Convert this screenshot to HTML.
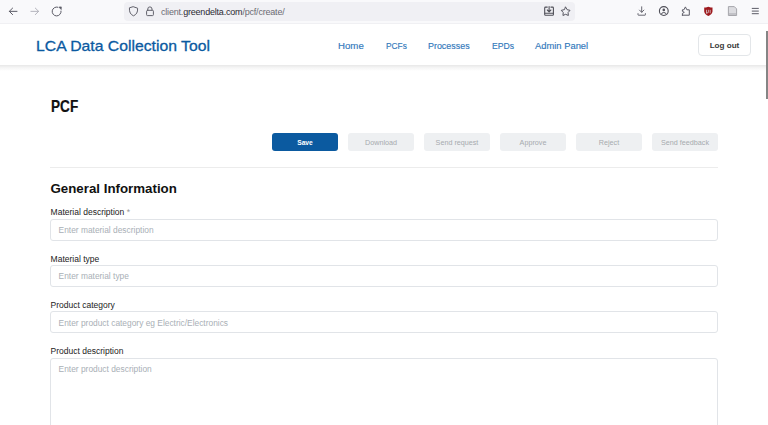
<!DOCTYPE html>
<html><head><meta charset="utf-8">
<style>
*{box-sizing:border-box;margin:0;padding:0}
html,body{width:768px;height:425px;overflow:hidden;background:#fff;font-family:"Liberation Sans",sans-serif}
.abs{position:absolute}
#tb{position:absolute;left:0;top:0;width:768px;height:24px;background:#f9f9fb;border-bottom:1px solid #f0f0f3}
#url{position:absolute;left:124px;top:2px;width:451px;height:19px;background:#f0f0f4;border-radius:4px}
#urltext{position:absolute;left:161px;top:7px;font-size:9px;color:#6b6b73;white-space:nowrap;letter-spacing:-0.2px}
#urltext b{font-weight:400;color:#2b2a33}
svg.ic{position:absolute;overflow:visible}
#hdr{position:absolute;left:0;top:24px;width:766px;height:41px;background:#fff}
#hsh{position:absolute;left:0;top:65px;width:766px;height:6px;background:linear-gradient(rgba(0,0,0,.095),rgba(0,0,0,.04) 45%,rgba(0,0,0,0))}
#title{position:absolute;left:35.7px;top:36.6px;font-size:15px;color:#0b5aa1;white-space:nowrap;-webkit-text-stroke:0.3px #0b5aa1;transform:scaleX(1.05);transform-origin:0 0}
.nav{position:absolute;top:39.5px;font-size:9.4px;color:#3178bb;white-space:nowrap;transform-origin:0 0;-webkit-text-stroke:0.15px #3178bb}
#logout{position:absolute;left:698px;top:34px;width:53px;height:22px;border:1px solid #e3e6e9;border-radius:4px;font-size:8.1px;font-weight:700;color:#3a3a3a;text-align:center;line-height:22px}
#sb{position:absolute;left:766px;top:30.5px;width:2px;height:68px;background:#858585}
#pcf{position:absolute;left:50.8px;top:97px;font-size:16.3px;font-weight:700;color:#111;white-space:nowrap;transform:scaleX(0.835);transform-origin:0 0;-webkit-text-stroke:0.2px #111}
.btn{position:absolute;top:133px;width:66px;height:18px;border-radius:3px;background:#eef0f2;color:#a6aaae;font-size:7.2px;text-align:center;line-height:19.5px;white-space:nowrap}
.btn.p{background:#0b5aa0;color:#fff;font-weight:700;font-size:6.7px}
#hr{position:absolute;left:50px;top:167px;width:668px;height:1px;background:#ececec}
#gi{position:absolute;left:50.5px;top:180.8px;font-size:13.3px;font-weight:700;color:#111;white-space:nowrap}
.lbl{position:absolute;left:50.6px;font-size:8.5px;color:#222;white-space:nowrap}
.lbl span{color:#999}
.inp{position:absolute;left:50px;width:668px;height:22px;border:1px solid #e1e4e8;border-radius:3px}
.ph{position:absolute;left:58.6px;margin-top:-0.5px;font-size:8.4px;color:#a9afb6;white-space:nowrap}
</style></head><body>
<div id="tb"></div>
<div id="url"></div>
<svg class="ic" style="left:0;top:0" width="768" height="24" viewBox="0 0 768 24">
<g fill="none" stroke-linecap="round" stroke-linejoin="round">
<path d="M17 11.35H9.3M12.6 8.1L9.3 11.35L12.6 14.6" stroke="#5b5b66" stroke-width="1"/>
<path d="M30.9 11.35H38.6M35.3 8.1L38.6 11.35L35.3 14.6" stroke="#b4b4bc" stroke-width="1"/>
<path d="M57.80 7.15A4.45 4.45 0 1 0 61.08 11.06" stroke="#5b5b66" stroke-width="1"/>
<path d="M133.5 6.8L137.6 8.2C137.9 12.2 136.4 14.6 133.5 15.8C130.6 14.6 129.1 12.2 129.4 8.2Z" stroke="#62626c" stroke-width="1"/>
<path d="M147.8 10.2V9A2.1 2.1 0 0 1 152 9V10.2" stroke="#62626c" stroke-width="1"/>
<rect x="146.6" y="10.3" width="6.8" height="5.3" rx="0.9" stroke="#62626c" stroke-width="1"/>
<path d="M547.3 7.1H545.6Q544.7 7.1 544.7 8V14.5Q544.7 15.3 545.6 15.3H552.6Q553.4 15.3 553.4 14.5V8Q553.4 7.1 552.6 7.1H550.9" stroke="#4f4f58" stroke-width="1.1"/>
<path d="M549.1 6.6V11.6M547.3 10L549.1 11.8L550.9 10M544.9 13.3H553.2" stroke="#4f4f58" stroke-width="1.1"/>
<path d="M565.65 7.15 L567.15 9.69 L570.02 10.33 L568.08 12.54 L568.35 15.47 L565.65 14.30 L562.95 15.47 L563.22 12.54 L561.28 10.33 L564.15 9.69Z" stroke="#55555f" stroke-width="1"/>
<path d="M641.7 6.8V12.2M639.5 10.1L641.7 12.3L643.9 10.1M638 13.6V14.8Q638 15.2 638.4 15.2H645Q645.4 15.2 645.4 14.8V13.6" stroke="#686872" stroke-width="1"/>
<circle cx="663.8" cy="11.05" r="4.4" stroke="#4f4f58" stroke-width="1.1"/>
<path d="M682.5 15.2H689.3V9.8H686.9L685.4 6.9L683.9 9.8H682.4V11.3L684.3 12.35L682.4 13.4V15.2Z" stroke="#5b5b66" stroke-width="1"/>
<path d="M752.2 8.4H758.4M752.2 11.1H758.4M752.2 13.7H758.4" stroke="#5b5b66" stroke-width="1"/>
</g>
<path d="M58.9 7.1L61.3 6.9L61.2 9.5Z" fill="#5b5b66" stroke="#5b5b66" stroke-width="0.7" stroke-linejoin="round"/>
<circle cx="663.8" cy="9.9" r="1.3" fill="#4f4f58"/>
<path d="M661.3 14.4Q661.6 12.5 663.8 12.5Q666 12.5 666.3 14.4" fill="none" stroke="#55555f" stroke-width="1"/>
<path d="M708.35 6.8L706 7.5L704.2 7.6V11.6C704.4 13.6 706.4 15.3 708.35 16.1C710.3 15.3 712.3 13.6 712.5 11.6V7.6L710.7 7.5Z" fill="#9e1a1e"/>
<path d="M706.5 9.8V13.6M706.5 12Q706.7 12.9 707.5 12.9Q708.4 12.9 708.4 12V9.8M710.2 9.8V12.6Q710.2 13.1 710.7 13" fill="none" stroke="#d9c9ca" stroke-width="0.8"/>
<path d="M728.4 6.6H734.3L736.6 8.9V15.5H728.4Z" fill="#dcdce0" stroke="#a2a2a8" stroke-width="0.95" stroke-linejoin="round"/>
<path d="M729 14H736" stroke="#a2a2a8" stroke-width="0.9"/>
</svg>
<div id="urltext">client.<b>greendelta.com</b>/pcf/create/</div>

<div id="hdr"></div><div id="hsh"></div>
<div id="title">LCA Data Collection Tool</div>
<div class="nav" style="left:338px;transform:scaleX(1.03)">Home</div>
<div class="nav" style="left:386px;transform:scaleX(0.89)">PCFs</div>
<div class="nav" style="left:428px;transform:scaleX(0.95)">Processes</div>
<div class="nav" style="left:492px;transform:scaleX(0.92)">EPDs</div>
<div class="nav" style="left:535px">Admin Panel</div>
<div id="logout">Log out</div>
<div id="sb"></div>

<div id="pcf">PCF</div>
<div class="btn p" style="left:272px">Save</div>
<div class="btn" style="left:348px">Download</div>
<div class="btn" style="left:424px">Send request</div>
<div class="btn" style="left:500px">Approve</div>
<div class="btn" style="left:576px">Reject</div>
<div class="btn" style="left:652px">Send feedback</div>
<div id="hr"></div>
<div id="gi">General Information</div>

<div class="lbl" style="top:207px">Material description <span>*</span></div>
<div class="inp" style="top:219px"></div>
<div class="ph" style="top:225px">Enter material description</div>

<div class="lbl" style="top:254px">Material type</div>
<div class="inp" style="top:265px"></div>
<div class="ph" style="top:271px">Enter material type</div>

<div class="lbl" style="top:300px">Product category</div>
<div class="inp" style="top:311px"></div>
<div class="ph" style="top:318px">Enter product category eg Electric/Electronics</div>

<div class="lbl" style="top:346px">Product description</div>
<div class="inp" style="top:358px;height:80px"></div>
<div class="ph" style="top:364px">Enter product description</div>
</body></html>
